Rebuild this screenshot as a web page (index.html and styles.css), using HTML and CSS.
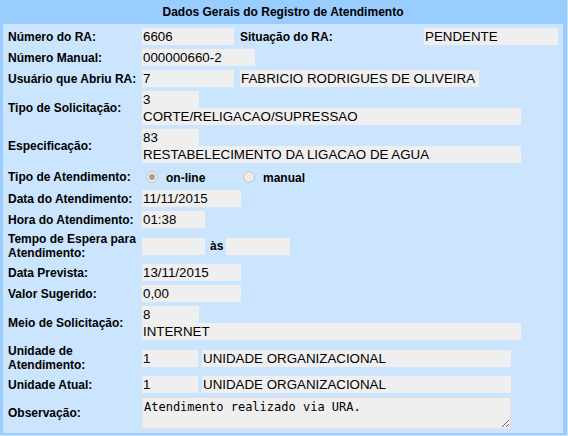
FILE: index.html
```html
<!DOCTYPE html>
<html lang="pt-BR">
<head>
<meta charset="utf-8">
<title>Dados Gerais do Registro de Atendimento</title>
<link rel="stylesheet" href="styles.css">
</head>
<body>
<div class="panel">
  <div class="title">Dados Gerais do Registro de Atendimento</div>
  <div class="form">
    <div class="row">
      <div class="lbl">Número do RA:</div>
      <div class="val">
        <span class="fld w92">6606</span>
        <span class="lbl sit">Situação do RA:</span>
        <span class="fld w134">PENDENTE</span>
      </div>
    </div>
    <div class="row">
      <div class="lbl">Número Manual:</div>
      <div class="val"><span class="fld w113">000000660-2</span></div>
    </div>
    <div class="row">
      <div class="lbl">Usuário que Abriu RA:</div>
      <div class="val">
        <span class="fld w92">7</span>
        <span class="fld w239 ml6">FABRICIO RODRIGUES DE OLIVEIRA</span>
      </div>
    </div>
    <div class="row">
      <div class="lbl">Tipo de Solicitação:</div>
      <div class="val stack">
        <span class="fld w57">3</span>
        <span class="fld w379">CORTE/RELIGACAO/SUPRESSAO</span>
      </div>
    </div>
    <div class="row">
      <div class="lbl">Especificação:</div>
      <div class="val stack">
        <span class="fld w57">83</span>
        <span class="fld w379">RESTABELECIMENTO DA LIGACAO DE AGUA</span>
      </div>
    </div>
    <div class="row radios">
      <div class="lbl">Tipo de Atendimento:</div>
      <div class="val">
        <span class="opt"><span class="radio checked"></span><span class="lbl opt-txt">on-line</span></span>
        <span class="opt"><span class="radio"></span><span class="lbl opt-txt">manual</span></span>
      </div>
    </div>
    <div class="row">
      <div class="lbl">Data do Atendimento:</div>
      <div class="val"><span class="fld w99">11/11/2015</span></div>
    </div>
    <div class="row">
      <div class="lbl">Hora do Atendimento:</div>
      <div class="val"><span class="fld w63">01:38</span></div>
    </div>
    <div class="row">
      <div class="lbl">Tempo de Espera para Atendimento:</div>
      <div class="val">
        <span class="fld w63"></span>
        <span class="lbl as">às</span>
        <span class="fld w64"></span>
      </div>
    </div>
    <div class="row">
      <div class="lbl">Data Prevista:</div>
      <div class="val"><span class="fld w99">13/11/2015</span></div>
    </div>
    <div class="row">
      <div class="lbl">Valor Sugerido:</div>
      <div class="val"><span class="fld w99">0,00</span></div>
    </div>
    <div class="row">
      <div class="lbl">Meio de Solicitação:</div>
      <div class="val stack">
        <span class="fld w57">8</span>
        <span class="fld w379">INTERNET</span>
      </div>
    </div>
    <div class="row">
      <div class="lbl">Unidade de Atendimento:</div>
      <div class="val">
        <span class="fld w56">1</span>
        <span class="fld w309 ml4">UNIDADE ORGANIZACIONAL</span>
      </div>
    </div>
    <div class="row">
      <div class="lbl">Unidade Atual:</div>
      <div class="val">
        <span class="fld w56">1</span>
        <span class="fld w309 ml4">UNIDADE ORGANIZACIONAL</span>
      </div>
    </div>
    <div class="row">
      <div class="lbl">Observação:</div>
      <div class="val"><textarea class="obs" readonly>Atendimento realizado via URA.</textarea></div>
    </div>
  </div>
</div>
</body>
</html>
```
FILE: styles.css
```css
html, body {
  margin: 0;
  background: #cbe5fe;
  font-family: "Liberation Sans", Arial, sans-serif;
  color: #000;
}

.panel {
  width: 560px;
  background: #99ccff;
  padding: 0 4px 2px 3px;
}

.title {
  height: 24px;
  line-height: 25px;
  text-align: center;
  font-weight: bold;
  font-size: 12px;
}

.form {
  background: #cbe5fe;
  padding: 4px 0 4px 5px;
  display: flex;
  flex-direction: column;
  gap: 4px;
}

.row {
  display: grid;
  grid-template-columns: 134px 1fr;
  align-items: center;
  min-height: 17px;
}

.row.radios {
  height: 19px;
}

.lbl {
  font-weight: bold;
  font-size: 12px;
  line-height: 14px;
}

.val {
  display: flex;
  align-items: center;
}

.val.stack {
  flex-direction: column;
  align-items: flex-start;
}

.fld {
  display: block;
  box-sizing: border-box;
  height: 17px;
  line-height: 17px;
  padding: 0 1px;
  background: #efefef;
  font-size: 13.333px;
  white-space: nowrap;
  overflow: hidden;
}

.w56 { width: 56px; }
.w57 { width: 57px; }
.w63 { width: 63px; }
.w64 { width: 64px; }
.w92 { width: 92px; }
.w99 { width: 99px; }
.w113 { width: 113px; }
.w134 { width: 134px; }
.w239 { width: 239px; }
.w309 { width: 309px; }
.w379 { width: 379px; }
.ml4 { margin-left: 4px; }
.ml6 { margin-left: 6px; }

.sit {
  width: 184px;
  margin-left: 6px;
  flex: none;
}

.as {
  width: 16px;
  margin-left: 5px;
}

.opt {
  display: flex;
  align-items: center;
  width: 97px;
}

.opt:first-child {
  margin-left: 4px;
}

.radio {
  position: relative;
  width: 12px;
  height: 12px;
  box-sizing: border-box;
  border-radius: 50%;
  border: 1px solid #c4c4c4;
  background: #ececec;
  flex: none;
}

.radio.checked::after {
  content: "";
  position: absolute;
  left: 2px;
  top: 2px;
  width: 6px;
  height: 6px;
  border-radius: 50%;
  background: #a3a3a3;
}

.opt-txt {
  margin-left: 8px;
  padding-top: 3px;
}

.obs {
  display: block;
  box-sizing: border-box;
  width: 369px;
  height: 32px;
  margin: 0;
  padding: 2px 1px;
  border: 1px solid #e2e2e2;
  background: #efefef;
  font-family: "DejaVu Sans Mono", "Liberation Mono", monospace;
  font-size: 12px;
  line-height: 14px;
  color: #000;
  outline: none;
}
```
